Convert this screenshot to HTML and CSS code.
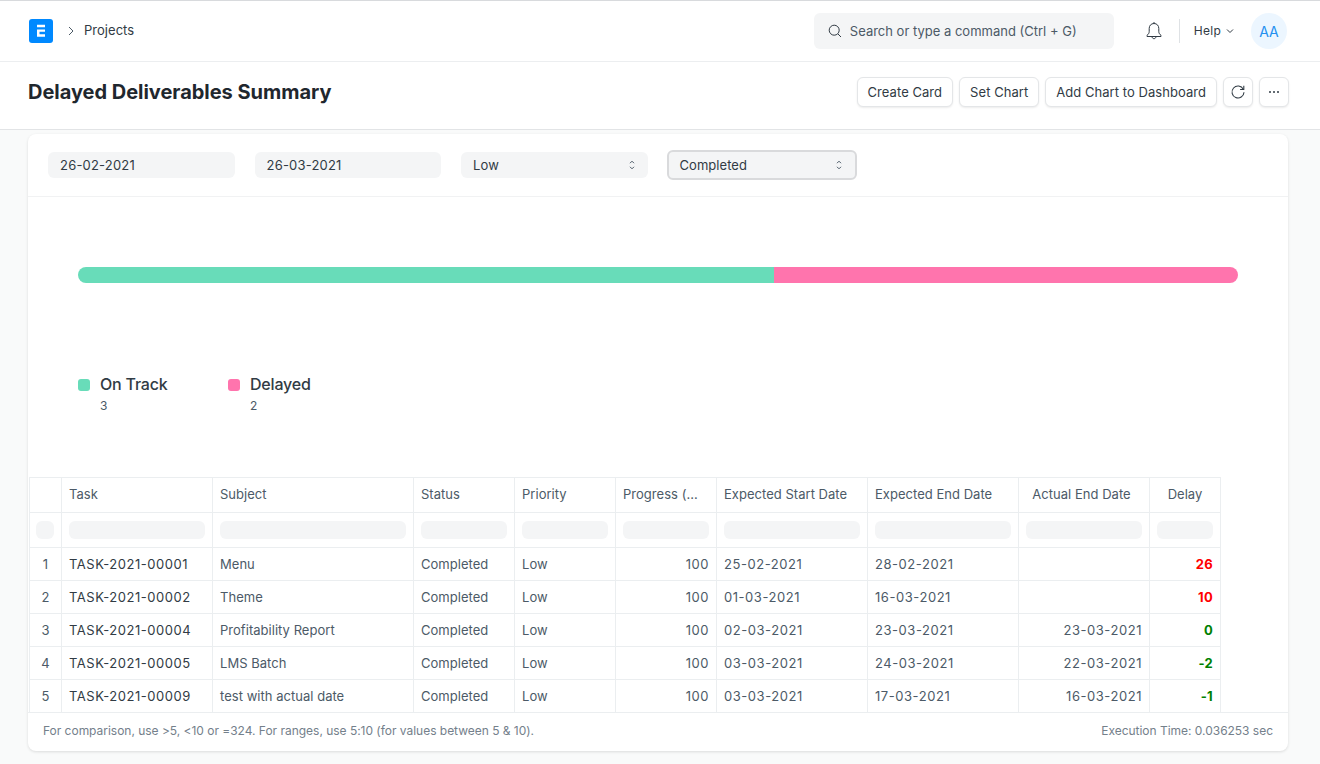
FILE: index.html
```html
<!DOCTYPE html>
<html lang="en">

<head>
    <meta charset="UTF-8">
    <meta name="viewport" content="width=device-width, initial-scale=1.0">
    <link rel="stylesheet" href="styles.css">
    <title>Delayed Deliverables Summary</title>
</head>

<body>
    <!-- Top navbar -->
    <header class="navbar">
        <div class="navLeft">
            <svg class="logo" width="24" height="24" viewBox="0 0 24 24">
                <rect width="24" height="24" rx="3" fill="#0089ff" />
                <path d="M8 5.700h8v2.500H8zM8 10.600h8v2.200h-5.500v2.400H16v2.500H8z" fill="#fff" />
            </svg>
            <svg class="crumbIcon" width="8" height="10" viewBox="0 0 8 10" fill="none" stroke="#4c5a67" stroke-width="1">
                <path d="M2 1l4 4-4 4" />
            </svg>
            <span class="crumb">Projects</span>
        </div>
        <div class="navRight">
            <div class="search">
                <svg width="14" height="14" viewBox="0 0 14 14" fill="none" stroke="#313b44" stroke-width="1">
                    <circle cx="6.200" cy="6.200" r="5" />
                    <path d="M10 10l3 3" />
                </svg>
                <span>Search or type a command (Ctrl + G)</span>
            </div>
            <svg class="bell" width="18" height="20" viewBox="0 0 18 20" fill="none" stroke="#313b44" stroke-width="1">
                <path d="M9 2.500c-3 0-4.800 2.200-4.800 5v3.200c0 1.400-1 2.800-2.200 3.600v1.200h14v-1.200c-1.200-.8-2.200-2.200-2.200-3.600V7.500c0-2.800-1.800-5-4.800-5z" />
                <path d="M9 1v1.500M7 15.500c0 1.300.9 2.200 2 2.200s2-.9 2-2.200" />
            </svg>
            <span class="navDivider"></span>
            <div class="help">
                <span>Help</span>
                <svg width="8" height="6" viewBox="0 0 8 6" fill="none" stroke="#313b44" stroke-width="1">
                    <path d="M1 1.500l3 3 3-3" />
                </svg>
            </div>
            <div class="avatar">AA</div>
        </div>
    </header>

    <!-- Page title and actions -->
    <section class="pageHead">
        <h1>Delayed Deliverables Summary</h1>
        <div class="actions">
            <button class="btn">Create Card</button>
            <button class="btn">Set Chart</button>
            <button class="btn">Add Chart to Dashboard</button>
            <button class="btn iconBtn">
                <svg width="16" height="16" viewBox="0 0 16 16" fill="none" stroke="#313b44" stroke-width="1.100">
                    <path d="M13.300 5.200A6 6 0 1 0 14 8.300" />
                    <path d="M13.800 1.800v3.700h-3.700" />
                </svg>
            </button>
            <button class="btn iconBtn">
                <svg width="12" height="4" viewBox="0 0 12 4" fill="#313b44">
                    <circle cx="2" cy="2" r="1" />
                    <circle cx="6" cy="2" r="1" />
                    <circle cx="10" cy="2" r="1" />
                </svg>
            </button>
        </div>
    </section>

    <main class="card">
        <div class="filters">
            <div class="field">26-02-2021</div>
            <div class="field">26-03-2021</div>
            <div class="field select">
                <span>Low</span>
                <svg width="6" height="10" viewBox="0 0 6 10" fill="none" stroke="#4c5a67" stroke-width="1">
                    <path d="M1 3.200l2-2 2 2M1 6.800l2 2 2-2" />
                </svg>
            </div>
            <div class="field select focused">
                <span>Completed</span>
                <svg width="6" height="10" viewBox="0 0 6 10" fill="none" stroke="#4c5a67" stroke-width="1">
                    <path d="M1 3.200l2-2 2 2M1 6.800l2 2 2-2" />
                </svg>
            </div>
        </div>

        <div class="chart">
            <div class="bar">
                <div class="barOn"></div>
                <div class="barDelayed"></div>
            </div>
            <div class="legend">
                <div class="legendItem">
                    <span class="swatch swatchOn"></span>
                    <div>
                        <div class="legendName">On Track</div>
                        <div class="legendValue">3</div>
                    </div>
                </div>
                <div class="legendItem">
                    <span class="swatch swatchDelayed"></span>
                    <div>
                        <div class="legendName">Delayed</div>
                        <div class="legendValue">2</div>
                    </div>
                </div>
            </div>
        </div>

        <table id="table">
            <colgroup>
                <col class="c32">
                <col class="c151">
                <col class="c201">
                <col class="c101">
                <col class="c101">
                <col class="c101">
                <col class="c151">
                <col class="c151">
                <col class="c131">
                <col class="c71">
            </colgroup>
            <thead>
                <tr class="trHead">
                    <th></th>
                    <th>Task</th>
                    <th>Subject</th>
                    <th>Status</th>
                    <th>Priority</th>
                    <th>Progress (...</th>
                    <th>Expected Start Date</th>
                    <th>Expected End Date</th>
                    <th class="center actualHead">Actual End Date</th>
                    <th class="center">Delay</th>
                </tr>
                <tr class="trFilter">
                    <td><div class="ghost"></div></td>
                    <td><div class="ghost"></div></td>
                    <td><div class="ghost"></div></td>
                    <td><div class="ghost"></div></td>
                    <td><div class="ghost"></div></td>
                    <td><div class="ghost"></div></td>
                    <td><div class="ghost"></div></td>
                    <td><div class="ghost"></div></td>
                    <td><div class="ghost"></div></td>
                    <td><div class="ghost"></div></td>
                </tr>
            </thead>
            <tbody>
                <tr>
                    <td class="center">1</td>
                    <td class="dark num">TASK-2021-00001</td>
                    <td>Menu</td>
                    <td>Completed</td>
                    <td>Low</td>
                    <td class="right num">100</td>
                    <td class="num">25-02-2021</td>
                    <td class="num">28-02-2021</td>
                    <td class="right"></td>
                    <td class="right late">26</td>
                </tr>
                <tr>
                    <td class="center">2</td>
                    <td class="dark num">TASK-2021-00002</td>
                    <td>Theme</td>
                    <td>Completed</td>
                    <td>Low</td>
                    <td class="right num">100</td>
                    <td class="num">01-03-2021</td>
                    <td class="num">16-03-2021</td>
                    <td class="right"></td>
                    <td class="right late">10</td>
                </tr>
                <tr>
                    <td class="center">3</td>
                    <td class="dark num">TASK-2021-00004</td>
                    <td>Profitability Report</td>
                    <td>Completed</td>
                    <td>Low</td>
                    <td class="right num">100</td>
                    <td class="num">02-03-2021</td>
                    <td class="num">23-03-2021</td>
                    <td class="right num">23-03-2021</td>
                    <td class="right ontime">0</td>
                </tr>
                <tr>
                    <td class="center">4</td>
                    <td class="dark num">TASK-2021-00005</td>
                    <td>LMS Batch</td>
                    <td>Completed</td>
                    <td>Low</td>
                    <td class="right num">100</td>
                    <td class="num">03-03-2021</td>
                    <td class="num">24-03-2021</td>
                    <td class="right num">22-03-2021</td>
                    <td class="right ontime">-2</td>
                </tr>
                <tr>
                    <td class="center">5</td>
                    <td class="dark num">TASK-2021-00009</td>
                    <td>test with actual date</td>
                    <td>Completed</td>
                    <td>Low</td>
                    <td class="right num">100</td>
                    <td class="num">03-03-2021</td>
                    <td class="num">17-03-2021</td>
                    <td class="right num">16-03-2021</td>
                    <td class="right ontime">-1</td>
                </tr>
            </tbody>
        </table>

        <footer class="cardFoot">
            <span>For comparison, use &gt;5, &lt;10 or =324. For ranges, use 5:10 (for values between 5 &amp; 10).</span>
            <span>Execution Time: 0.036253 sec</span>
        </footer>
    </main>
</body>

</html>
```

FILE: styles.css
```css
* {
    box-sizing: border-box;
}

body {
    margin: 0;
    height: 764px;
    overflow: hidden;
    background-color: #f9fafa;
    border-top: 1px solid #d8dadd;
    font-family: Inter, "Liberation Sans", sans-serif;
    font-size: 13px;
    letter-spacing: 0.03px;
    color: #313b44;
}

.navbar {
    display: flex;
    justify-content: space-between;
    align-items: center;
    height: 61px;
    padding: 0 33px 0 29px;
    background: #fff;
    border-bottom: 1px solid #eceef0;
}

.navLeft,
.navRight {
    display: flex;
    align-items: center;
}

.crumbIcon {
    margin-left: 14px;
}

.crumb {
    margin-left: 9px;
    padding-bottom: 2px;
    color: #313b44;
}

.search {
    display: flex;
    align-items: center;
    gap: 8px;
    width: 300px;
    height: 36px;
    padding: 0 14px;
    background: #f4f5f6;
    border-radius: 6px;
    letter-spacing: 0;
    color: #4c5a67;
}

.bell {
    margin-left: 31px;
}

.navDivider {
    width: 1px;
    height: 24px;
    margin-left: 16px;
    background: #dfe2e5;
}

.help {
    display: flex;
    align-items: center;
    gap: 5px;
    margin-left: 14px;
    padding-bottom: 1px;
    font-size: 12px;
    letter-spacing: 0.25px;
}

.avatar {
    display: flex;
    align-items: center;
    justify-content: center;
    width: 36px;
    height: 36px;
    margin-left: 17px;
    border-radius: 50%;
    background: #ecf6ff;
    color: #2490ef;
    font-size: 14px;
}

.pageHead {
    display: flex;
    justify-content: space-between;
    align-items: center;
    height: 68px;
    padding: 0 31px 8px 28px;
    background: #fff;
    border-bottom: 1px solid #e2e4e6;
}

h1 {
    margin: 0;
    font-size: 20px;
    font-weight: 700;
    letter-spacing: -0.03px;
    color: #1f272e;
}

.actions {
    display: flex;
    gap: 6px;
}

.btn {
    height: 30px;
    padding: 0 10px;
    background: #fff;
    border: 1px solid #e4e6e8;
    border-radius: 6px;
    box-shadow: 0 1px 2px rgba(0, 0, 0, 0.08);
    font-family: inherit;
    font-size: 13px;
    letter-spacing: 0.05px;
    color: #313b44;
}

.iconBtn {
    display: flex;
    align-items: center;
    justify-content: center;
    width: 30px;
    padding: 0;
}

.card {
    display: flex;
    flex-direction: column;
    height: 617px;
    margin: 4px 32px 0 28px;
    background: #fff;
    border-radius: 8px;
    box-shadow: 0 1px 3px rgba(0, 0, 0, 0.12);
    overflow: hidden;
}

.filters {
    display: flex;
    align-items: center;
    gap: 20px;
    height: 63px;
    padding: 0 20px;
    border-bottom: 1px solid #f1f2f3;
}

.field {
    width: 186.500px;
    height: 26px;
    padding: 0 12px;
    line-height: 26px;
    background: #f4f5f6;
    border-radius: 6px;
    letter-spacing: 0.2px;
}

.select {
    display: flex;
    justify-content: space-between;
    align-items: center;
    padding-right: 13px;
}

.focused {
    width: 190.500px;
    height: 30px;
    margin-left: -1px;
    padding-left: 11px;
    border: 2px solid #d9dadc;
    letter-spacing: 0.05px;
}

.chart {
    height: 280px;
    padding: 70px 50px 0;
}

.bar {
    display: flex;
    height: 16px;
    border-radius: 8px;
    overflow: hidden;
}

.barOn {
    width: 696px;
    background: #68dcb9;
}

.barDelayed {
    flex: 1;
    background: #ff74ad;
}

.legend {
    display: flex;
    margin-top: 91px;
}

.legendItem {
    display: flex;
    width: 150px;
}

.swatch {
    width: 12px;
    height: 12px;
    margin-top: 5px;
    margin-right: 10px;
    border-radius: 3px;
}

.swatchOn {
    background: #68dcb9;
}

.swatchDelayed {
    background: #ff74ad;
}

.legendName {
    font-size: 16px;
    font-weight: 500;
    line-height: 20px;
    letter-spacing: -0.2px;
    color: #313b44;
}

.legendValue {
    margin-top: 5px;
    font-size: 12px;
    line-height: 14px;
    color: #4c5a67;
}

table {
    width: 1192px;
    margin-left: 1px;
    table-layout: fixed;
    border-collapse: collapse;
}

.c32 { width: 32px; }
.c71 { width: 71px; }
.c101 { width: 101px; }
.c131 { width: 131px; }
.c151 { width: 151px; }
.c201 { width: 201px; }

th,
td {
    padding: 0 7px;
    border: 1px solid #ebeef0;
    font-weight: 400;
    text-align: left;
    white-space: nowrap;
    overflow: hidden;
    color: #4c5a67;
}

.trHead th {
    height: 35px;
    padding-bottom: 2px;
    color: #4c5a67;
}

.trFilter td {
    height: 35px;
}

.trFilter td:first-child {
    padding-left: 6px;
}

tbody td {
    height: 33px;
}

tbody tr:last-child td {
    height: 32px;
    border-bottom: none;
}

.dark {
    color: #313b44;
}

.num {
    letter-spacing: 0.55px;
}

th.center,
td.center {
    text-align: center;
}

th.actualHead {
    padding-right: 12px;
}

td.right {
    text-align: right;
}

td.late {
    font-weight: 700;
    letter-spacing: 0.3px;
    color: #ff0000;
}

td.ontime {
    font-weight: 700;
    letter-spacing: 0.3px;
    color: #008000;
}

.ghost {
    height: 18px;
    background: #f4f5f6;
    border-radius: 6px;
}

.cardFoot {
    display: flex;
    flex: 1;
    justify-content: space-between;
    align-items: center;
    padding: 0 15px 2px;
    border-top: 1px solid #ebeef0;
    font-size: 12px;
    letter-spacing: -0.02px;
    color: #74808b;
}
```
